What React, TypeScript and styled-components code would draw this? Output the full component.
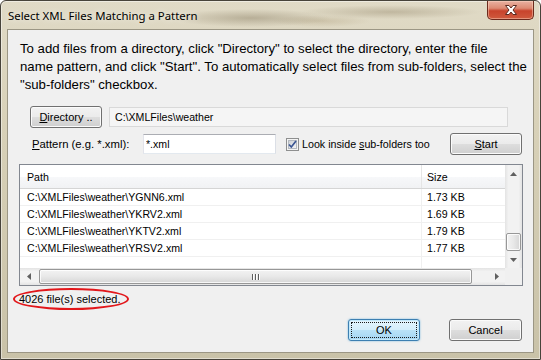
import styled, { createGlobalStyle, css } from 'styled-components';

const UI_FONT = `"Liberation Sans", Arial, sans-serif`;

const GlobalStyle = createGlobalStyle`
  html, body { margin: 0; padding: 0; background: #fff; }
  body { font-family: ${UI_FONT}; font-size: 11px; color: #000; }
  #root { width: 541px; height: 360px; }
`;

const FILES = [
  { path: 'C:\\XMLFiles\\weather\\YGNN6.xml', size: '1.73 KB' },
  { path: 'C:\\XMLFiles\\weather\\YKRV2.xml', size: '1.69 KB' },
  { path: 'C:\\XMLFiles\\weather\\YKTV2.xml', size: '1.79 KB' },
  { path: 'C:\\XMLFiles\\weather\\YRSV2.xml', size: '1.77 KB' },
];

/* ---------- window frame ---------- */

const Window = styled.div`
  box-sizing: border-box;
  width: 541px;
  height: 360px;
  display: flex;
  flex-direction: column;
  border: 1px solid #47433a;
  border-radius: 6px 6px 0 0;
  overflow: hidden;
  background:
    radial-gradient(ellipse 80px 9px at 250px 17px, rgba(110, 96, 68, 0.35), transparent),
    radial-gradient(ellipse 90px 7px at 390px 11px, rgba(120, 104, 72, 0.3), transparent),
    radial-gradient(ellipse 50px 6px at 320px 20px, rgba(150, 130, 90, 0.25), transparent),
    linear-gradient(180deg, #e0dac6 0%, #d8d1b8 35%, #c9c2a8 100%);
  box-shadow: inset 0 0 0 1px rgba(255, 255, 255, 0.45);
`;

const TitleBar = styled.div`
  height: 28px;
  flex: none;
  display: flex;
  align-items: flex-start;
  padding-left: 7px;
`;

const Title = styled.div`
  flex: 1;
  margin-top: 7px;
  font: 11.4px "Noto Sans", ${UI_FONT};
  color: #000;
  text-shadow: 0 0 6px rgba(255, 255, 255, 0.8);
`;

const CloseButton = styled.div`
  box-sizing: border-box;
  width: 47px;
  height: 19px;
  margin-right: 6px;
  display: flex;
  align-items: center;
  justify-content: center;
  border: 1px solid #6b2a1d;
  border-top: none;
  border-radius: 0 0 5px 5px;
  background: linear-gradient(180deg, #e9b1a1 0%, #dd8a73 40%, #c8432c 55%, #cf5a3e 100%);
  box-shadow: inset 0 0 0 1px rgba(255, 220, 200, 0.45);
`;

const Client = styled.div`
  flex: 1;
  margin: 0 6px 6px 6px;
  border: 1px solid #9b9684;
  background: #f0f0f0;
  display: flex;
  flex-direction: column;
  padding-top: 10px;
`;

/* ---------- content ---------- */

const Intro = styled.p`
  margin: 0;
  padding-left: 12px;
  font-size: 13.2px;
  line-height: 18px;
  white-space: nowrap;
`;

const Row = styled.div<{ $top: number }>`
  display: flex;
  align-items: center;
  height: 22px;
  margin-top: ${({ $top }) => $top}px;
  padding: 0 11px 0 22px;
`;

const U = styled.span`
  text-decoration: underline;
`;

const PushButton = styled.button<{ $width: number; $default?: boolean }>`
  box-sizing: border-box;
  position: relative;
  flex: none;
  width: ${({ $width }) => $width}px;
  height: 22px;
  padding: 0;
  font: 11px ${UI_FONT};
  color: #000;
  border: 1px solid #707070;
  border-radius: 3px;
  background: linear-gradient(180deg, #f2f2f2 0%, #ebebeb 48%, #dddddd 52%, #cfcfcf 100%);
  box-shadow: inset 0 0 0 1px #fbfbfb;

  ${({ $default }) =>
    $default &&
    css`
      border-color: #3c7fb1;
      background: linear-gradient(180deg, #e5f4fc 0%, #d4eefb 48%, #b9e2f8 52%, #a3d5f2 100%);
      box-shadow: inset 0 0 0 1px #c4e8fa, 0 0 2px rgba(60, 160, 220, 0.7);

      &::after {
        content: '';
        position: absolute;
        inset: 2px;
        border: 1px dotted #1a1a1a;
      }
    `}
`;

const TextField = styled.input<{ $width: number; $readOnlyLook?: boolean }>`
  box-sizing: border-box;
  width: ${({ $width }) => $width}px;
  height: 20px;
  margin: 0;
  font: 10.6px ${UI_FONT};
  color: #000;
  outline: none;
  border: 1px solid #abadb3;
  border-color: #abadb3 #dbdfe6 #e3e9ef #e2e3ea;
  background: #fff;
  padding: 0 0 0 2px;

  ${({ $readOnlyLook }) =>
    $readOnlyLook &&
    css`
      background: #f5f5f5;
      border-color: #d9d9d9;
      padding-left: 5px;
    `}
`;

const FieldLabel = styled.label`
  width: 111px;
  margin-left: 2px;
  flex: none;
  font-size: 11.3px;
`;

const CheckWrap = styled.label`
  display: flex;
  align-items: center;
  gap: 3px;
  margin-left: 10px;
  font-size: 10.7px;
`;

const Spacer = styled.div`
  flex: 1;
`;

/* ---------- list view ---------- */

const ListView = styled.div`
  box-sizing: border-box;
  width: 504px;
  height: 122px;
  margin: 9px 0 0 11px;
  border: 1px solid #828790;
  background: #fff;
  display: grid;
  grid-template-columns: 1fr 17px;
  grid-template-rows: 1fr 17px;
  font-size: 10.6px;
`;

const ListBody = styled.div`
  display: flex;
  flex-direction: column;
  overflow: hidden;
`;

const HeaderRow = styled.div`
  display: grid;
  grid-template-columns: 401px 1fr;
  height: 24px;
  flex: none;
  box-sizing: border-box;
  border-bottom: 1px solid #d5d5d5;
  background: linear-gradient(180deg, #ffffff 0%, #ffffff 50%, #f7f8fa 51%, #f1f2f4 100%);
`;

const HeaderCell = styled.div<{ $divider?: boolean }>`
  display: flex;
  align-items: center;
  padding-left: ${({ $divider }) => ($divider ? 5 : 7)}px;
  border-left: ${({ $divider }) => ($divider ? '1px solid #e5e5e5' : 'none')};
`;

const DataRow = styled.div`
  display: grid;
  grid-template-columns: 401px 1fr;
  height: 17px;
  flex: none;
  box-sizing: border-box;
  border-bottom: 1px solid #f0f0f0;
`;

const DataCell = styled.div<{ $divider?: boolean }>`
  display: flex;
  align-items: center;
  padding-left: ${({ $divider }) => ($divider ? 5 : 7)}px;
  border-left: ${({ $divider }) => ($divider ? '1px solid #f0f0f0' : 'none')};
  white-space: nowrap;
`;

const FillerRow = styled.div`
  flex: 1;
  display: grid;
  grid-template-columns: 401px 1fr;
`;

const FillerCell = styled.div<{ $divider?: boolean }>`
  border-left: ${({ $divider }) => ($divider ? '1px solid #f0f0f0' : 'none')};
`;

const ScrollBar = styled.div<{ $vertical?: boolean }>`
  display: flex;
  flex-direction: ${({ $vertical }) => ($vertical ? 'column' : 'row')};
  background: ${({ $vertical }) =>
    $vertical
      ? 'linear-gradient(90deg, #e3e3e3 0%, #f2f2f2 20%, #f2f2f2 80%, #e3e3e3 100%)'
      : 'linear-gradient(180deg, #e3e3e3 0%, #f2f2f2 20%, #f2f2f2 80%, #e3e3e3 100%)'};
`;

const ArrowBox = styled.div`
  width: 17px;
  height: 17px;
  flex: none;
  display: flex;
  align-items: center;
  justify-content: center;
`;

const Track = styled.div<{ $vertical?: boolean }>`
  flex: 1;
  display: flex;
  flex-direction: ${({ $vertical }) => ($vertical ? 'column' : 'row')};
  justify-content: ${({ $vertical }) => ($vertical ? 'flex-end' : 'flex-start')};
  padding: ${({ $vertical }) => ($vertical ? '0 1px' : '1px 0 1px 2px')};
`;

const Thumb = styled.div<{ $vertical?: boolean; $size: number }>`
  box-sizing: border-box;
  ${({ $vertical, $size }) => ($vertical ? `height: ${$size}px;` : `width: ${$size}px;`)}
  border: 1px solid #979797;
  border-radius: 2px;
  display: flex;
  align-items: center;
  justify-content: center;
  gap: 2px;
  background: ${({ $vertical }) =>
    $vertical
      ? 'linear-gradient(90deg, #f3f3f3 0%, #e8e8e8 50%, #d6d6d6 100%)'
      : 'linear-gradient(180deg, #f3f3f3 0%, #e8e8e8 50%, #d6d6d6 100%)'};
  box-shadow: inset 0 0 0 1px rgba(255, 255, 255, 0.8);
`;

const GripLine = styled.div`
  width: 1px;
  height: 6px;
  background: #5f5f5f;
  box-shadow: 1px 0 0 #fff;
`;

const Corner = styled.div`
  background: #f0f0f0;
`;

/* ---------- status + buttons ---------- */

const Status = styled.div`
  align-self: flex-start;
  box-sizing: border-box;
  height: 22px;
  margin: 2px 0 0 5px;
  padding: 0 6px 0 4px;
  display: flex;
  align-items: center;
  font-size: 11px;
  border: 2.5px solid #e2171b;
  border-radius: 50%;
`;

const ButtonRow = styled.div`
  display: flex;
  justify-content: flex-end;
  gap: 29px;
  margin-top: 9px;
  padding-right: 11px;
`;

/* ---------- icons ---------- */

const CloseGlyph = () => (
  <svg width="16" height="12" viewBox="0 0 16 12">
    <path
      d="M2.5 1.5 H6 L8 4 L10 1.5 H13.5 L10 6 L13.5 10.5 H10 L8 8 L6 10.5 H2.5 L6 6 Z"
      fill="#fff"
      stroke="#5a2a20"
      strokeWidth="1"
      strokeLinejoin="round"
    />
  </svg>
);

const CheckIcon = () => (
  <svg width="13" height="13" viewBox="0 0 13 13">
    <defs>
      <linearGradient id="cbfill" x1="0" y1="0" x2="1" y2="1">
        <stop offset="0" stopColor="#cbcfd5" />
        <stop offset="1" stopColor="#f6f6f6" />
      </linearGradient>
    </defs>
    <rect x="0.5" y="0.5" width="12" height="12" fill="#f4f4f4" stroke="#8e8f8f" />
    <rect x="2.5" y="2.5" width="8" height="8" fill="url(#cbfill)" stroke="#b4b9c0" />
    <path d="M3 6.5 L5.3 9 L10 3" fill="none" stroke="#3b5693" strokeWidth="1.7" />
  </svg>
);

const Arrow = ({ dir }: { dir: 'up' | 'down' | 'left' | 'right' }) => {
  const pts = {
    up: '0,4 3.5,0 7,4',
    down: '0,0 7,0 3.5,4',
    left: '4,0 4,7 0,3.5',
    right: '0,0 4,3.5 0,7',
  }[dir];
  const vert = dir === 'up' || dir === 'down';
  return (
    <svg width={vert ? 7 : 4} height={vert ? 4 : 7} viewBox={vert ? '0 0 7 4' : '0 0 4 7'}>
      <polygon points={pts} fill="#606060" />
    </svg>
  );
};

/* ---------- component ---------- */

export default function App() {
  return (
    <>
      <GlobalStyle />
      <Window>
        <TitleBar>
          <Title>Select XML Files Matching a Pattern</Title>
          <CloseButton>
            <CloseGlyph />
          </CloseButton>
        </TitleBar>

        <Client>
          <Intro>
            To add files from a directory, click "Directory" to select the directory, enter the file
            <br />
            name pattern, and click "Start". To automatically select files from sub-folders, select the
            <br />
            "sub-folders" checkbox.
          </Intro>

          <Row $top={12}>
            <PushButton $width={72}>
              <U>D</U>irectory ..
            </PushButton>
            <TextField
              $width={399}
              $readOnlyLook
              readOnly
              value={'C:\\XMLFiles\\weather'}
              style={{ marginLeft: 7 }}
            />
          </Row>

          <Row $top={5}>
            <FieldLabel>
              <U>P</U>attern (e.g. *.xml):
            </FieldLabel>
            <TextField $width={133} readOnly value="*.xml" />
            <CheckWrap>
              <CheckIcon />
              <span>
                Look inside <U>s</U>ub-folders too
              </span>
            </CheckWrap>
            <Spacer />
            <PushButton $width={72}>
              <U>S</U>tart
            </PushButton>
          </Row>

          <ListView>
            <ListBody>
              <HeaderRow>
                <HeaderCell>Path</HeaderCell>
                <HeaderCell $divider>Size</HeaderCell>
              </HeaderRow>
              {FILES.map((f) => (
                <DataRow key={f.path}>
                  <DataCell>{f.path}</DataCell>
                  <DataCell $divider>{f.size}</DataCell>
                </DataRow>
              ))}
              <FillerRow>
                <FillerCell />
                <FillerCell $divider />
              </FillerRow>
            </ListBody>

            <ScrollBar $vertical>
              <ArrowBox>
                <Arrow dir="up" />
              </ArrowBox>
              <Track $vertical>
                <Thumb $vertical $size={18} />
              </Track>
              <ArrowBox>
                <Arrow dir="down" />
              </ArrowBox>
            </ScrollBar>

            <ScrollBar>
              <ArrowBox>
                <Arrow dir="left" />
              </ArrowBox>
              <Track>
                <Thumb $size={433}>
                  <GripLine />
                  <GripLine />
                  <GripLine />
                </Thumb>
              </Track>
              <ArrowBox>
                <Arrow dir="right" />
              </ArrowBox>
            </ScrollBar>
            <Corner />
          </ListView>

          <Status>4026 file(s) selected.</Status>

          <ButtonRow>
            <PushButton $width={72} $default>
              OK
            </PushButton>
            <PushButton $width={73}>Cancel</PushButton>
          </ButtonRow>
        </Client>
      </Window>
    </>
  );
}
